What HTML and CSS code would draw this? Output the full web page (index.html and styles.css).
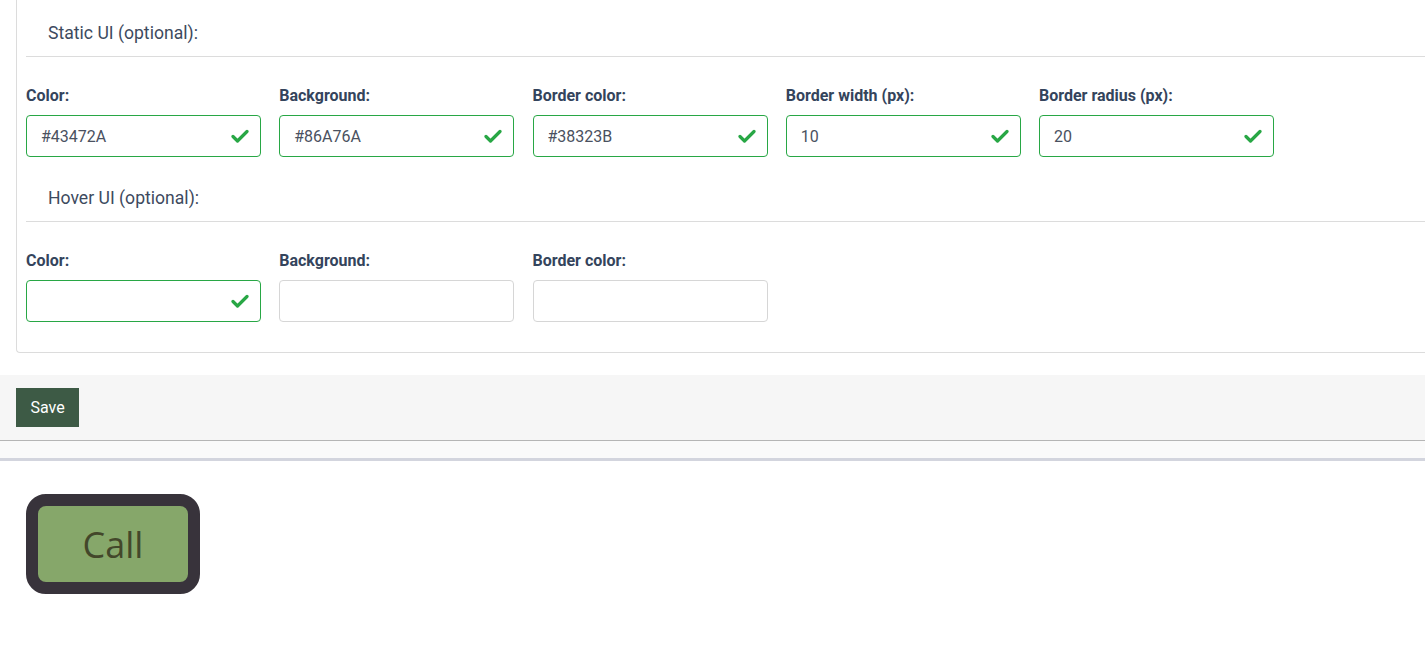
FILE: index.html
```html
<!DOCTYPE html>
<html lang="en">
<head>
    <meta charset="UTF-8">
    <meta name="viewport" content="width=device-width, initial-scale=1.0">
    <title>Button settings</title>
    <link rel="stylesheet" href="styles.css">
</head>
<body>
    <div class="panel">
        <h4 class="section-title">Static UI (optional):</h4>
        <div class="fields">
            <div class="field">
                <label>Color:</label>
                <div class="input valid">#43472A<svg class="check" viewBox="0 0 18 14"><path d="M2 7.5l4.5 4.5L16 2.5"/></svg></div>
            </div>
            <div class="field">
                <label>Background:</label>
                <div class="input valid">#86A76A<svg class="check" viewBox="0 0 18 14"><path d="M2 7.5l4.5 4.5L16 2.5"/></svg></div>
            </div>
            <div class="field">
                <label>Border color:</label>
                <div class="input valid">#38323B<svg class="check" viewBox="0 0 18 14"><path d="M2 7.5l4.5 4.5L16 2.5"/></svg></div>
            </div>
            <div class="field">
                <label>Border width (px):</label>
                <div class="input valid">10<svg class="check" viewBox="0 0 18 14"><path d="M2 7.5l4.5 4.5L16 2.5"/></svg></div>
            </div>
            <div class="field">
                <label>Border radius (px):</label>
                <div class="input valid">20<svg class="check" viewBox="0 0 18 14"><path d="M2 7.5l4.5 4.5L16 2.5"/></svg></div>
            </div>
        </div>

        <h4 class="section-title">Hover UI (optional):</h4>
        <div class="fields">
            <div class="field">
                <label>Color:</label>
                <div class="input valid"><svg class="check" viewBox="0 0 18 14"><path d="M2 7.5l4.5 4.5L16 2.5"/></svg></div>
            </div>
            <div class="field">
                <label>Background:</label>
                <div class="input"></div>
            </div>
            <div class="field">
                <label>Border color:</label>
                <div class="input"></div>
            </div>
        </div>
    </div>

    <div class="actions">
        <button class="save">Save</button>
    </div>
    <div class="strip"></div>

    <div class="preview">
        <button class="call">Call</button>
    </div>
</body>
</html>
```

FILE: styles.css
```css
body{
    margin: 0;
    font-family: Roboto, "Noto Sans", sans-serif;
    color: #34445c;
    background-color: white;
}
.panel{
    margin-left: 16px;
    border: 1px solid #dcdcdc;
    border-top: none;
    border-right: none;
    border-bottom-left-radius: 4px;
    padding: 0 0 30px 9px;
}
.section-title{
    margin: 0;
    padding: 21px 0 11px 22px;
    font-size: 17.6px;
    line-height: 24px;
    font-weight: 400;
    color: #3d4a5e;
    border-bottom: 1px solid #dcdcdc;
}
.fields{
    display: grid;
    grid-template-columns: repeat(5, 235px);
    column-gap: 18.25px;
    padding-top: 28px;
    margin-bottom: 8px;
}
.fields:last-child{
    margin-bottom: 0;
}
.field label{
    display: block;
    font-size: 16px;
    font-weight: 700;
    line-height: 21px;
    margin-bottom: 9px;
}
.input{
    box-sizing: border-box;
    height: 42px;
    border: 1px solid #d6d6d6;
    border-radius: 4px;
    padding: 0 14px;
    display: flex;
    align-items: center;
    justify-content: space-between;
    font-size: 16px;
    color: #4a5160;
}
.input.valid{
    border-color: #28a745;
}
.check{
    width: 18px;
    height: 14px;
    margin-left: auto;
    margin-right: -3px;
    fill: none;
    stroke: #28a745;
    stroke-width: 3.2;
    stroke-linecap: round;
    stroke-linejoin: round;
}
.actions{
    margin-top: 22px;
    background-color: #f6f6f6;
    border-bottom: 1px solid #b5b5b5;
    padding: 13px 16px;
}
.save{
    border: none;
    background-color: #3d5a45;
    color: white;
    font-family: Roboto, sans-serif;
    font-size: 16px;
    height: 39px;
    padding: 0 14.5px;
    display: block;
}
.strip{
    height: 17px;
    background-color: #fafafa;
    border-bottom: 3px solid #d3d5de;
}
.preview{
    padding: 33px 26px;
}
.call{
    box-sizing: border-box;
    width: 174px;
    height: 100px;
    border: 12px solid #38333b;
    border-radius: 20px;
    background-color: #86a76a;
    color: #43472a;
    font-family: "Open Sans", sans-serif;
    font-size: 36px;
    display: block;
}
```
